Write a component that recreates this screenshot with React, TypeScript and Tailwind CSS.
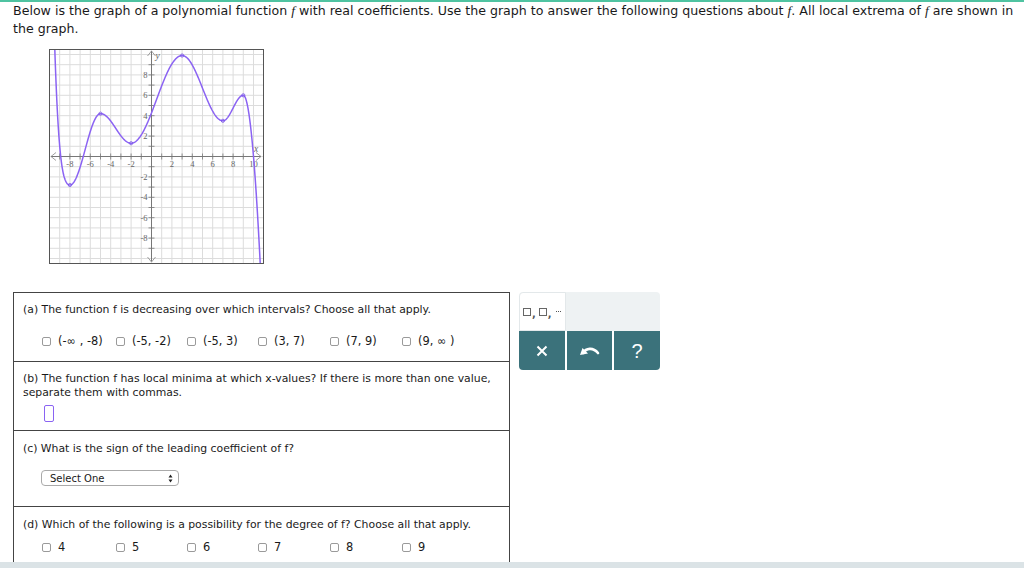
import React from "react"

const U = 10.2
const OX = 102.5
const OY = 107.5
const SIZE = 215

const extrema: [number, number][] = [
  [-8, -2.8],
  [-5, 4.2],
  [-2, 1.3],
  [3, 9.9],
  [7, 3.5],
  [9, 6],
]

const f = (x: number) => {
  if (x < -8) {
    const d = -8 - x
    return -2.8 + 1.92 * d * d + 1.9 * d * d * d * d
  }
  if (x > 9) {
    const d = x - 9
    return 6 - 6 * d * d
  }
  for (let i = 0; i < extrema.length - 1; i++) {
    const [x0, y0] = extrema[i]
    const [x1, y1] = extrema[i + 1]
    if (x >= x0 && x <= x1) {
      const t = (x - x0) / (x1 - x0)
      return y0 + ((y1 - y0) * (1 - Math.cos(Math.PI * t))) / 2
    }
  }
  return 0
}

const sx = (x: number) => OX + x * U
const sy = (y: number) => OY - y * U

const curvePath = () => {
  const pts: string[] = []
  for (let x = -9.8; x <= 10.8; x += 0.04) {
    pts.push(`${sx(x).toFixed(2)},${sy(f(x)).toFixed(2)}`)
  }
  return "M" + pts.join(" L")
}

const range = (a: number, b: number) => Array.from({ length: b - a + 1 }, (_, i) => a + i)

const Graph = () => {
  return (
    <div className="ml-[49px] mt-[11px] w-[215px] h-[215px] border border-[#555] bg-white">
      <svg width={213} height={213} viewBox="1 1 213 213" className="block">
        <defs>
          <clipPath id="box">
            <rect x={1} y={1} width={213} height={213} />
          </clipPath>
        </defs>
        {range(-10, 11).map((i) => (
          <line key={"gx" + i} x1={sx(i)} x2={sx(i)} y1={0} y2={SIZE} stroke="#dcdcdc" strokeWidth={1} />
        ))}
        {range(-10, 10).map((i) => (
          <line key={"gy" + i} y1={sy(i)} y2={sy(i)} x1={0} x2={SIZE} stroke="#dcdcdc" strokeWidth={1} />
        ))}
        {/* axes */}
        <line x1={2} x2={212} y1={OY} y2={OY} stroke="#777" strokeWidth={1} />
        <line x1={OX} x2={OX} y1={2} y2={212} stroke="#777" strokeWidth={1} />
        <path d={`M7,${OY - 4} L2,${OY} L7,${OY + 4}`} fill="none" stroke="#888" strokeWidth={0.8} />
        <path d={`M207,${OY - 4} L212,${OY} L207,${OY + 4}`} fill="none" stroke="#888" strokeWidth={0.8} />
        <path d={`M${OX - 4},7 L${OX},2 L${OX + 4},7`} fill="none" stroke="#888" strokeWidth={0.8} />
        <path d={`M${OX - 4},208 L${OX},213 L${OX + 4},208`} fill="none" stroke="#888" strokeWidth={0.8} />
        {range(-9, 10).map((i) =>
          i === 0 ? null : (
            <line key={"tx" + i} x1={sx(i)} x2={sx(i)} y1={OY - 3} y2={OY + 3} stroke="#777" strokeWidth={0.8} />
          ),
        )}
        {range(-9, 9).map((i) =>
          i === 0 ? null : (
            <line key={"ty" + i} y1={sy(i)} y2={sy(i)} x1={OX - 3} x2={OX + 3} stroke="#777" strokeWidth={0.8} />
          ),
        )}
        <g fontFamily="'Liberation Serif', serif" fontSize={8.5} fill="#666">
          {[-8, -6, -4, -2, 2, 4, 6, 8, 10].map((i) => (
            <text key={"lx" + i} x={sx(i)} y={OY + 10} textAnchor="middle">
              {i}
            </text>
          ))}
          {[8, 6, 4, 2, -2, -4, -6, -8].map((i) => (
            <text key={"ly" + i} x={OX - 4} y={sy(i) + 3} textAnchor="end">
              {i}
            </text>
          ))}
          <text x={OX + 4} y={10} fontStyle="italic" fontSize={9.5}>
            y
          </text>
          <text x={205} y={OY - 5} fontStyle="italic" fontSize={9.5}>
            x
          </text>
        </g>
        <g clipPath="url(#box)">
          <path d={curvePath()} fill="none" stroke="#8b63f3" strokeWidth={1.5} />
        </g>
        {extrema.map(([x, y]) => (
          <circle key={"e" + x} cx={sx(x)} cy={sy(y)} r={1.6} fill="none" stroke="#7a55e8" strokeWidth={0.8} />
        ))}
      </svg>
    </div>
  )
}

const Box = () => <span className="inline-block w-[9px] h-[9px] border border-[#9a9a9a] rounded-[2px] bg-white shrink-0" />

const widths = ["w-[74px]", "w-[71px]", "w-[71px]", "w-[72px]", "w-[72px]", "w-[72px]"]

const OptionRow = ({ items }: { items: string[] }) => {
  return (
    <div className="flex items-center pl-[19px] leading-[14px] text-[11.4px]">
      {items.map((label, i) => (
        <div key={i} className={"flex items-center gap-[7px] " + widths[i]}>
          <Box />
          <span className="whitespace-pre">{label}</span>
        </div>
      ))}
    </div>
  )
}

const Keypad = () => {
  return (
    <div className="ml-[9px] w-[141px] h-[78px] rounded-[4px] overflow-hidden flex flex-col">
      <div className="h-[39px] flex bg-[#eef2f3]">
        <div className="w-[47px] h-full bg-white border border-[#e3e8ea] rounded-tl-[4px] flex items-center pl-[3px] gap-[1px] text-[#555]">
          <span className="inline-block w-[8px] h-[8px] border border-[#666]" />
          <span className="text-[10px] leading-none mt-[4px] font-bold">,</span>
          <span className="inline-block w-[8px] h-[8px] border border-[#666] ml-[2px]" />
          <span className="text-[10px] leading-none mt-[4px] font-bold">,</span>
          <span className="flex gap-[1px] ml-[3px]">
            <span className="w-[1px] h-[1px] bg-[#555]" />
            <span className="w-[1px] h-[1px] bg-[#555]" />
            <span className="w-[1px] h-[1px] bg-[#555]" />
          </span>
        </div>
      </div>
      <div className="h-[39px] flex gap-[2px] bg-white">
        <div className="flex-1 bg-[#3b727b] flex items-center justify-center">
          <svg width="12" height="12" viewBox="0 0 12 12">
            <path d="M1.5 1.5 L10.5 10.5 M10.5 1.5 L1.5 10.5" stroke="white" strokeWidth="2" />
          </svg>
        </div>
        <div className="flex-1 bg-[#3b727b] flex items-center justify-center">
          <svg width="22" height="12" viewBox="0 0 22 12">
            <path d="M4 8 C7 3 14 2 19 8" fill="none" stroke="white" strokeWidth="2.6" strokeLinecap="round" />
            <path d="M1 10 L3.5 3 L9 8.5 Z" fill="white" />
          </svg>
        </div>
        <div className="flex-1 bg-[#3b727b] flex items-center justify-center text-white text-[20px] font-['Liberation_Sans',sans-serif]">
          ?
        </div>
      </div>
    </div>
  )
}

const F = () => <i className="font-['Liberation_Serif',serif] text-[13.5px] leading-none">f</i>

export default function App() {
  return (
    <div className="relative w-[1024px] h-[568px] overflow-hidden bg-white text-[#1a1a1a] font-['DejaVu_Sans','Liberation_Sans',sans-serif]">
      <div className="h-[2px] bg-[#4fc3a1]" />
      <div className="pl-[13px] pr-[6px] text-[12.6px] leading-[18px]">
        Below is the graph of a polynomial function <F /> with real coefficients. Use the graph to answer the following
        questions about <F />. All local extrema of <F /> are shown in the graph.
      </div>
      <Graph />
      <div className="flex items-start mt-[28px] ml-[13px]">
        <div className="w-[497px] border-x border-t border-[#444] text-[10.85px]">
          <div className="h-[69px] border-b border-[#444] pl-[9px] pt-[10px]">
            <div className="leading-[14px]">(a) The function f is decreasing over which intervals? Choose all that apply.</div>
            <div className="mt-[17px]">
              <OptionRow items={["(-∞ , -8)", "(-5, -2)", "(-5, 3)", "(3, 7)", "(7, 9)", "(9, ∞ )"]} />
            </div>
          </div>
          <div className="h-[69px] border-b border-[#444] pl-[9px] pt-[10px]">
            <div className="leading-[14px]">
              (b) The function f has local minima at which x-values? If there is more than one value,
              <br />
              separate them with commas.
            </div>
            <div className="mt-[5px] ml-[21px] w-[10px] h-[17px] border-[1.5px] border-[#8a63f3] rounded-[2px]" />
          </div>
          <div className="h-[76px] border-b border-[#444] pl-[9px] pt-[11px]">
            <div className="leading-[14px]">(c) What is the sign of the leading coefficient of f?</div>
            <div className="mt-[14px] ml-[18px] w-[138px] h-[16px] border border-[#aaa] rounded-[4px] bg-white flex items-center justify-between pl-[8px] pr-[5px] text-[10px]">
              <span>Select One</span>
              <svg width="5" height="9" viewBox="0 0 5 9">
                <path d="M0.5 3.5 L2.5 0.5 L4.5 3.5 Z M0.5 5.5 L2.5 8.5 L4.5 5.5 Z" fill="#222" />
              </svg>
            </div>
          </div>
          <div className="h-[80px] pl-[9px] pt-[11px]">
            <div className="leading-[14px]">(d) Which of the following is a possibility for the degree of f? Choose all that apply.</div>
            <div className="mt-[8px]">
              <OptionRow items={["4", "5", "6", "7", "8", "9"]} />
            </div>
          </div>
        </div>
        <Keypad />
      </div>
      <div className="absolute left-0 right-0 bottom-0 h-[6px] bg-[#dbe3e6]" />
    </div>
  )
}
